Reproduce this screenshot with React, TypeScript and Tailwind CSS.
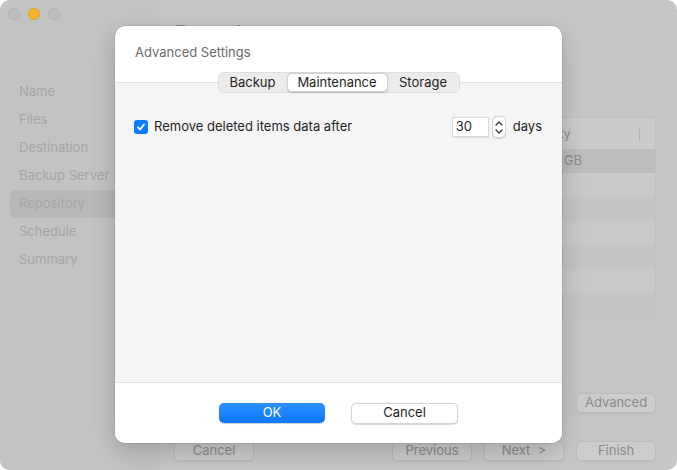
// Assistant de sauvegarde (fond grisé) + feuille "Advanced Settings" par-dessus

const FONT = { fontFamily: 'Inter, "Noto Sans", sans-serif' }

const steps = ['Name', 'Files', 'Destination', 'Backup Server', 'Repository', 'Schedule', 'Summary']

function GhostButton({ label, className = '' }: { label: string; className?: string }) {
  return (
    <div
      className={`flex h-[20px] w-[80px] items-center justify-center rounded-[5px] border border-[#bdbdbd] bg-[#cccccc] text-[13px] text-[#8b8b8b] shadow-[0_0.5px_1px_rgba(0,0,0,0.08)] ${className}`}
    >
      {label}
    </div>
  )
}

function Stepper() {
  return (
    <div className="flex h-[22px] w-[14px] flex-col items-center justify-center rounded-[5px] border border-[#d6d6d6] bg-white shadow-[0_0.5px_1px_rgba(0,0,0,0.15)]">
      <svg width="8" height="5" viewBox="0 0 8 5" fill="none" aria-hidden="true">
        <path d="M1 4l3-3 3 3" stroke="#333" strokeWidth="1.3" strokeLinecap="round" strokeLinejoin="round" />
      </svg>
      <div className="h-[3px]" />
      <svg width="8" height="5" viewBox="0 0 8 5" fill="none" aria-hidden="true">
        <path d="M1 1l3 3 3-3" stroke="#333" strokeWidth="1.3" strokeLinecap="round" strokeLinejoin="round" />
      </svg>
    </div>
  )
}

export default function App() {
  return (
    <div className="relative h-[470px] w-[677px] overflow-hidden bg-white" style={FONT}>
      {/* Fenêtre principale, assombrie par la feuille */}
      <div className="flex h-full overflow-hidden rounded-[10px] bg-[#c6c6c6]">
        {/* Barre latérale */}
        <div className="flex w-[159px] flex-col bg-[#c3c3c3]">
          <div className="flex gap-[8px] pl-[8px] pt-[8px]">
            <span className="h-[12px] w-[12px] rounded-full border border-[#b4b4b4] bg-[#bdbdbd]" />
            <span className="h-[12px] w-[12px] rounded-full border border-[#e0a21f] bg-[#f6b62c]" />
            <span className="h-[12px] w-[12px] rounded-full border border-[#b4b4b4] bg-[#bdbdbd]" />
          </div>
          <div className="mt-[58px] flex flex-col px-[10px]">
            {steps.map((s) => (
              <div
                key={s}
                className={`flex h-[28px] items-center rounded-[6px] px-[9px] text-[13px] text-[#a6a6a6] ${
                  s === 'Repository' ? 'bg-[#b8b8b8]' : ''
                }`}
              >
                {s}
              </div>
            ))}
          </div>
        </div>

        {/* Contenu de l'étape */}
        <div className="flex flex-1 flex-col pl-[16px] pr-[21px]">
          <div className="pt-[21px] text-[20px] font-bold leading-[24px] text-[#8a8a8a]">Repository</div>

          <div className="mt-[72px] flex flex-col border border-[#c0c0c0] bg-[#c9c9c9]">
            <div className="flex h-[31px] items-center bg-[#cbcbcb] text-[12px] text-[#8c8c8c]">
              <div className="w-[344px]" />
              <div className="flex-1">Capacity</div>
              <div className="mr-[15px] h-[14px] w-px bg-[#b5b5b5]" />
            </div>
            <div className="flex h-[24px] items-center bg-[#bdbdbd] text-[13px] text-[#8c8c8c]">
              <div className="w-[336px]" />
              <div className="flex-1 pl-[8px]">108.57 GB</div>
            </div>
            {[0, 1, 2, 3, 4, 5].map((i) => (
              <div key={i} className={`h-[24px] ${i % 2 === 0 ? 'bg-[#c9c9c9]' : 'bg-[#c4c4c4]'}`} />
            ))}
          </div>

          <div className="mt-[75px] flex justify-end">
            <GhostButton label="Advanced" />
          </div>

          <div className="mt-[28px] flex items-center">
            <GhostButton label="Cancel" className="-ml-[1px]" />
            <div className="flex-1" />
            <GhostButton label="Previous" />
            <GhostButton label="Next  >" className="ml-[12px] whitespace-pre" />
            <GhostButton label="Finish" className="ml-[12px]" />
          </div>
        </div>
      </div>

      {/* Feuille "Advanced Settings" */}
      <div className="absolute left-[115px] top-[26px] flex h-[417px] w-[447px] flex-col overflow-hidden rounded-[10px] bg-white shadow-[0_0_0_0.5px_rgba(0,0,0,0.15),0_8px_24px_rgba(0,0,0,0.2)]">
        <div className="h-[56px] pl-[20px] pt-[18px] text-[13px] leading-[16px] text-[#6b6b6b]">Advanced Settings</div>

        <div className="flex flex-1 flex-col border-t border-[#e3e3e3] bg-[#f5f5f5]">
          {/* Onglets */}
          <div className="mx-auto -mt-[11px] flex h-[21px] items-stretch rounded-[6px] border border-[#dedede] bg-[#ececec] text-[13px] text-[#1f1f1f]">
            <div className="flex w-[68px] items-center justify-center">Backup</div>
            <div className="flex w-[101px] items-center justify-center rounded-[5px] border border-[#d2d2d2] bg-white shadow-[0_0.5px_1.5px_rgba(0,0,0,0.18)]">
              Maintenance
            </div>
            <div className="flex w-[71px] items-center justify-center">Storage</div>
          </div>

          {/* Option */}
          <div className="mt-[23px] flex items-center pl-[19px] pr-[20px]">
            <div className="flex h-[14px] w-[14px] items-center justify-center rounded-[3px] bg-[#0b7bff]">
              <svg width="10" height="10" viewBox="0 0 10 10" fill="none" aria-hidden="true">
                <path d="M2 5.3l2 2.2L8 2.5" stroke="white" strokeWidth="1.8" strokeLinecap="round" strokeLinejoin="round" />
              </svg>
            </div>
            <span className="ml-[6px] text-[13px] text-[#1f1f1f]">Remove deleted items data after</span>
            <div className="flex-1" />
            <div className="flex h-[20px] w-[37px] items-center border border-[#d8d8d8] bg-white pl-[3px] text-[13px] text-[#1f1f1f] shadow-[0_0.5px_0.5px_rgba(0,0,0,0.08)]">
              30
            </div>
            <div className="ml-[3px]">
              <Stepper />
            </div>
            <span className="ml-[7px] text-[13px] text-[#1f1f1f]">days</span>
          </div>
        </div>

        <div className="flex h-[61px] items-center justify-center gap-[26px] border-t border-[#e3e3e3] bg-white">
          <div className="flex h-[20px] w-[106px] items-center justify-center rounded-[5px] bg-gradient-to-b from-[#2c8fff] to-[#0a78ff] text-[13px] text-white shadow-[0_0.5px_1px_rgba(0,0,0,0.2)]">
            OK
          </div>
          <div className="flex h-[21px] w-[107px] items-center justify-center rounded-[5px] border border-[#d4d4d4] bg-white text-[13px] text-[#1f1f1f] shadow-[0_0.5px_1px_rgba(0,0,0,0.15)]">
            Cancel
          </div>
        </div>
      </div>
    </div>
  )
}
